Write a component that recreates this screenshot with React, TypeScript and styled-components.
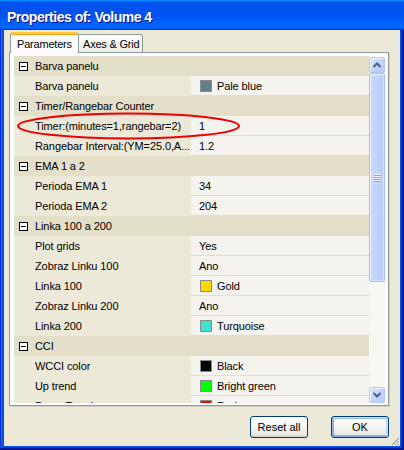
import React from "react";
import styled, { createGlobalStyle } from "styled-components";

const GlobalStyle = createGlobalStyle`
  html, body {
    margin: 0;
    padding: 0;
    width: 404px;
    height: 450px;
    overflow: hidden;
    background: #ffffff;
  }
  body {
    font-family: "Liberation Sans", Arial, sans-serif;
    font-size: 11px;
    letter-spacing: -0.1px;
    color: #000;
  }
  * { box-sizing: border-box; }
`;

const Window = styled.div`
  width: 404px;
  height: 450px;
  display: flex;
  flex-direction: column;
  background: #0054e3;
  box-shadow: inset -1px -1px #00138c, inset 1px 0 #0831d9, inset -2px -2px #001ea0,
    inset 2px 0 #166aee, inset -3px -3px #003bda, inset 3px 0 #0855dd;
`;

const TitleBar = styled.div`
  height: 30px;
  flex: none;
  display: flex;
  align-items: center;
  padding: 3px 0 0 7px;
  background: linear-gradient(
    180deg,
    #0997ff,
    #0053ee 8%,
    #0050ee 40%,
    #0066ff 88%,
    #0066ff 93%,
    #005bff 95%,
    #003dd7 96%,
    #003dd7
  );
  color: #ffffff;
  font-family: "Liberation Sans", Arial, sans-serif;
  font-weight: bold;
  font-size: 14px;
  letter-spacing: -0.5px;
  text-shadow: 1px 1px #0f1089;
`;

const Body = styled.div`
  position: relative;
  flex: 1;
  margin: 0 4px 4px 4px;
  background: #ece9d8;
  display: flex;
  flex-direction: column;
  padding: 2px 11px 0 5px;
`;

const TabStrip = styled.div`
  position: relative;
  z-index: 1;
  display: flex;
  align-items: flex-end;
  height: 21px;
  margin: 0 0 -1px 1px;
`;

const Tab = styled.div<{ $active?: boolean }>`
  display: flex;
  align-items: center;
  white-space: nowrap;
  font-size: 11px;
  letter-spacing: -0.2px;
  border: 1px solid #919b9c;
  border-radius: 3px 3px 0 0;
  ${(p) =>
    p.$active
      ? `
    width: 69px;
    height: 21px;
    padding: 1px 0 0 6px;
    border-bottom: none;
    border-top: 2px solid #ffc83c;
    box-shadow: inset 0 1px #f5a623;
    background: #fcfcfe;
  `
      : `
    width: 64px;
    height: 19px;
    padding: 1px 0 0 4px;
    border-left: none;
    border-radius: 0 3px 0 0;
    background: linear-gradient(180deg, #ffffff, #f3f3ef 70%, #ecebe5);
  `}
`;

const Panel = styled.div`
  height: 354px;
  flex: none;
  border: 1px solid #919b9c;
  background: #fcfcfe;
  padding: 4px 3px 2px 4px;
  box-shadow: 1px 1px 0 #d0cebf;
`;

const Grid = styled.div`
  position: relative;
  display: flex;
  height: 346px;
  background: #ece9d8;
`;

const Rows = styled.div`
  flex: 1;
  overflow: hidden;
  display: flex;
  flex-direction: column;
  margin-top: -1px;
`;

const CategoryRow = styled.div`
  flex: none;
  height: 20px;
  display: flex;
  align-items: center;
  gap: 7px;
  padding-left: 5px;
  background: #e3dfc8;
  white-space: nowrap;
`;

const ExpandBox = styled.span`
  position: relative;
  width: 9px;
  height: 9px;
  flex: none;
  border: 1px solid #000000;
  background: #ffffff;
  &::after {
    content: "";
    position: absolute;
    left: 1px;
    top: 3px;
    width: 5px;
    height: 1px;
    background: #000000;
  }
`;

const PropRow = styled.div`
  flex: none;
  height: 20px;
  display: grid;
  grid-template-columns: 177px 1fr;
`;

const NameCell = styled.div`
  padding-left: 21px;
  line-height: 20px;
  white-space: nowrap;
  overflow: hidden;
  background: #ece9d8;
`;

const ValueCell = styled.div`
  display: flex;
  align-items: center;
  gap: 5px;
  padding-left: 8px;
  background: #f4f3ee;
  border-bottom: 1px solid #e3dfc8;
  white-space: nowrap;
  overflow: hidden;
`;

const Swatch = styled.span<{ $color: string }>`
  width: 12px;
  height: 12px;
  flex: none;
  margin-left: 1px;
  border: 1px solid #8c8c8c;
  background: ${(p) => p.$color};
`;

const ScrollBar = styled.div`
  width: 16px;
  flex: none;
  display: flex;
  flex-direction: column;
  background: #f7f6f1;
`;

const ScrollButton = styled.div`
  width: 16px;
  height: 16px;
  flex: none;
  display: flex;
  align-items: center;
  justify-content: center;
  border: 1px solid #b4c8f6;
  border-radius: 2px;
  background: linear-gradient(135deg, #dbe6fe, #c3d4fd 50%, #b6cafc);
  box-shadow: inset 1px 1px #eef3fe;
`;

const Track = styled.div`
  flex: 1;
  display: flex;
  flex-direction: column;
`;

const Thumb = styled.div`
  height: 209px;
  flex: none;
  display: flex;
  flex-direction: column;
  align-items: center;
  justify-content: center;
  gap: 1px;
  border: 1px solid #a9bff2;
  border-radius: 2px;
  background: linear-gradient(90deg, #cad9fd, #c2d3fd 50%, #b8cbfa);
  box-shadow: inset 1px 1px #f1f5fe, inset -1px -1px #d6e2fe;
`;

const GripLine = styled.span`
  width: 7px;
  height: 1px;
  background: #eef3fe;
  box-shadow: 0 1px #8ca5e2;
`;

const ButtonRow = styled.div`
  display: flex;
  justify-content: flex-end;
  gap: 23px;
  margin-top: 10px;
`;

const Button = styled.button<{ $default?: boolean }>`
  width: 58px;
  height: 22px;
  padding: 0;
  font-family: "Liberation Sans", Arial, sans-serif;
  font-size: 11px;
  color: #000;
  border: 1px solid #003c74;
  border-radius: 3px;
  background: linear-gradient(180deg, #ffffff, #ecebe6 86%, #d6d0c5);
  ${(p) =>
    p.$default
      ? `box-shadow: inset -1px 1px #cee7ff, inset 1px 2px #98b8ea, inset -2px 2px #bcd4f6, inset 1px -1px #89ade4, inset 2px -2px #89ade4;`
      : ``}
`;

const Overlay = styled.svg`
  position: absolute;
  left: 0;
  top: 0;
  pointer-events: none;
  overflow: visible;
`;

const Grip = styled.svg`
  position: absolute;
  right: 0;
  bottom: 0;
`;

type Prop = { name: string; value: string; color?: string };
type Category = { title: string; props: Prop[] };

const data: Category[] = [
  { title: "Barva panelu", props: [{ name: "Barva panelu", value: "Pale blue", color: "#607e8b" }] },
  {
    title: "Timer/Rangebar Counter",
    props: [
      { name: "Timer:(minutes=1,rangebar=2)", value: "1" },
      { name: "Rangebar Interval:(YM=25.0,A...", value: "1.2" },
    ],
  },
  {
    title: "EMA 1 a 2",
    props: [
      { name: "Perioda EMA 1", value: "34" },
      { name: "Perioda EMA 2", value: "204" },
    ],
  },
  {
    title: "Linka 100 a 200",
    props: [
      { name: "Plot grids", value: "Yes" },
      { name: "Zobraz Linku 100", value: "Ano" },
      { name: "Linka 100", value: "Gold", color: "#ffd700" },
      { name: "Zobraz Linku 200", value: "Ano" },
      { name: "Linka 200", value: "Turquoise", color: "#40e0d0" },
    ],
  },
  {
    title: "CCI",
    props: [
      { name: "WCCI color", value: "Black", color: "#000000" },
      { name: "Up trend", value: "Bright green", color: "#00ff00" },
      { name: "Down Trend", value: "Red", color: "#ff0000" },
    ],
  },
];

const Arrow = ({ up }: { up?: boolean }) => (
  <svg width="8" height="6" viewBox="0 0 8 6">
    <path
      d={up ? "M0.5 5 L4 1.5 L7.5 5" : "M0.5 1 L4 4.5 L7.5 1"}
      fill="none"
      stroke="#4d6185"
      strokeWidth="2"
    />
  </svg>
);

export default function App() {
  return (
    <>
      <GlobalStyle />
      <Window>
        <TitleBar>Properties of: Volume 4</TitleBar>
        <Body>
          <TabStrip>
            <Tab $active>Parameters</Tab>
            <Tab>Axes &amp; Grid</Tab>
          </TabStrip>
          <Panel>
            <Grid>
              <Rows>
                {data.map((cat) => (
                  <React.Fragment key={cat.title}>
                    <CategoryRow>
                      <ExpandBox />
                      {cat.title}
                    </CategoryRow>
                    {cat.props.map((p) => (
                      <PropRow key={p.name}>
                        <NameCell>{p.name}</NameCell>
                        <ValueCell>
                          {p.color && <Swatch $color={p.color} />}
                          {p.value}
                        </ValueCell>
                      </PropRow>
                    ))}
                  </React.Fragment>
                ))}
              </Rows>
              <ScrollBar>
                <ScrollButton>
                  <Arrow up />
                </ScrollButton>
                <Track>
                  <Thumb>
                    <GripLine />
                    <GripLine />
                    <GripLine />
                    <GripLine />
                  </Thumb>
                </Track>
                <ScrollButton>
                  <Arrow />
                </ScrollButton>
              </ScrollBar>
              <Overlay width="355" height="100">
                <ellipse cx="114.5" cy="69" rx="110.5" ry="12.5" fill="none" stroke="#f00000" strokeWidth="2" />
              </Overlay>
            </Grid>
          </Panel>
          <ButtonRow>
            <Button>Reset all</Button>
            <Button $default>OK</Button>
          </ButtonRow>
          <Grip width="10" height="10" viewBox="0 0 10 10">
            <path d="M9 2 L2 9 M9 5 L5 9 M9 8 L8 9" stroke="#a6a394" strokeWidth="1.2" />
            <path d="M10 3 L3 10 M10 6 L6 10" stroke="#ffffff" strokeWidth="1" />
          </Grip>
        </Body>
      </Window>
    </>
  );
}
